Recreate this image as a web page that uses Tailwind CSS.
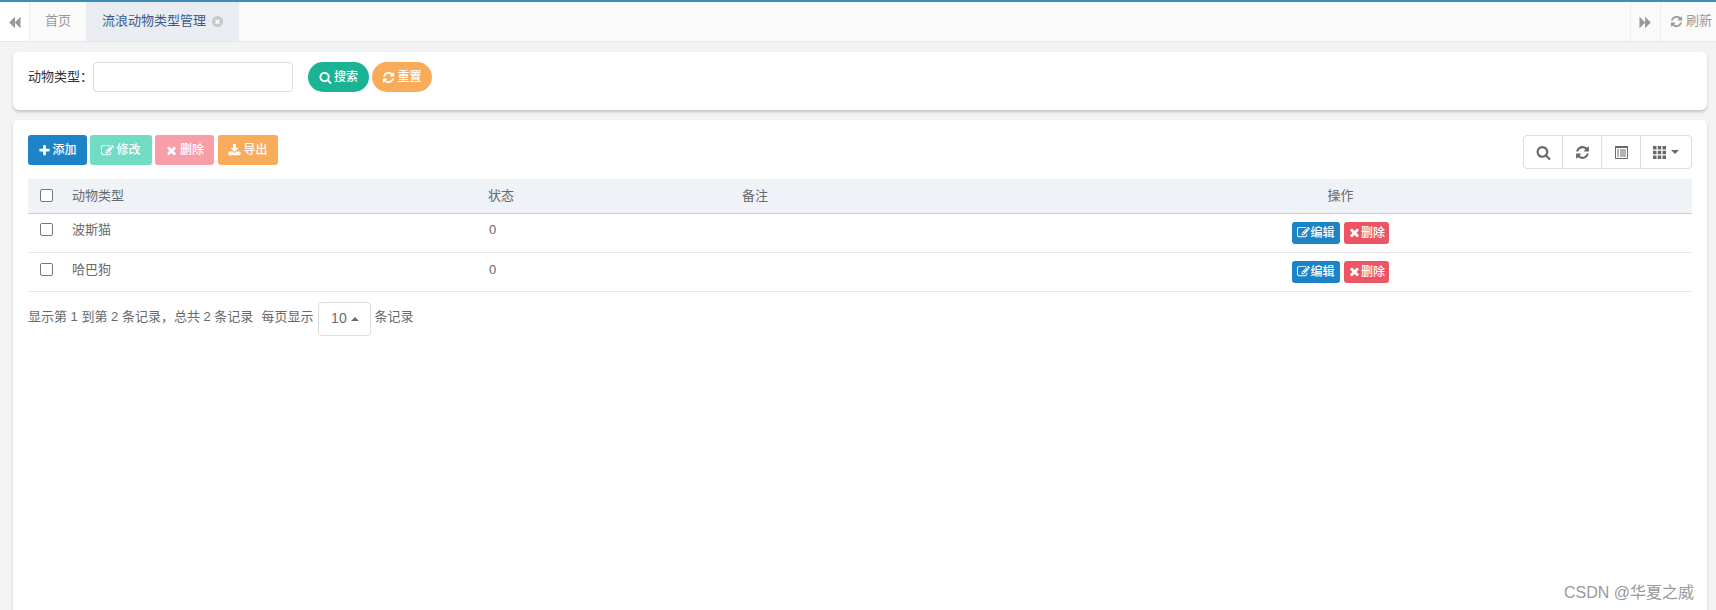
<!DOCTYPE html>
<html lang="zh-CN">

<head>
    <meta charset="UTF-8" />
    <title>流浪动物类型管理</title>
    <script src="https://cdn.jsdelivr.net/npm/@tailwindcss/browser@4"></script>
</head>

<body class="h-[610px] overflow-hidden bg-[#f3f3f4] font-['Liberation_Sans','Noto_Sans_CJK_SC',sans-serif] text-[13px] text-[#676a6c]">
    <!-- icons -->
    <svg class="hidden">
        <symbol id="i-search" viewBox="0 0 1792 1792"><path fill="currentColor" d="M1216 832q0-185-131.5-316.5t-316.5-131.5-316.5 131.5-131.5 316.5 131.5 316.5 316.5 131.5 316.5-131.5 131.5-316.5zm512 832q0 52-38 90t-90 38q-54 0-90-38l-343-342q-179 124-399 124-143 0-273.5-55.5t-225-150-150-225-55.5-273.5 55.5-273.5 150-225 225-150 273.5-55.5 273.5 55.5 225 150 150 225 55.5 273.5q0 220-124 399l343 343q37 37 37 90z"/></symbol>
        <symbol id="i-refresh" viewBox="0 0 1792 1792"><path fill="currentColor" d="M1639 1056q0 5-1 7-64 268-268 434.5t-478 166.5q-146 0-282.5-55t-243.5-157l-129 129q-19 19-45 19t-45-19-19-45v-448q0-26 19-45t45-19h448q26 0 45 19t19 45-19 45l-137 137q71 66 161 102t187 36q134 0 250-65t186-179q11-17 53-117 8-23 30-23h192q13 0 22.5 9.5t9.5 22.5zm25-800v448q0 26-19 45t-45 19h-448q-26 0-45-19t-19-45 19-45l138-138q-148-137-349-137-134 0-250 65t-186 179q-11 17-53 117-8 23-30 23h-199q-13 0-22.5-9.5t-9.5-22.5v-7q65-268 270-434.5t480-166.5q146 0 284 55.5t245 156.5l130-129q19-19 45-19t45 19 19 45z"/></symbol>
        <symbol id="i-plus" viewBox="0 0 1792 1792"><path fill="currentColor" d="M1600 736v192q0 40-28 68t-68 28h-416v416q0 40-28 68t-68 28h-192q-40 0-68-28t-28-68v-416h-416q-40 0-68-28t-28-68v-192q0-40 28-68t68-28h416v-416q0-40 28-68t68-28h192q40 0 68 28t28 68v416h416q40 0 68 28t28 68z"/></symbol>
        <symbol id="i-times" viewBox="0 0 1792 1792"><path fill="currentColor" d="M1490 1322q0 40-28 68l-136 136q-28 28-68 28t-68-28l-294-294-294 294q-28 28-68 28t-68-28l-136-136q-28-28-28-68t28-68l294-294-294-294q-28-28-28-68t28-68l136-136q28-28 68-28t68 28l294 294 294-294q28-28 68-28t68 28l136 136q28 28 28 68t-28 68l-294 294 294 294q28 28 28 68z"/></symbol>
        <symbol id="i-edit" viewBox="0 0 1792 1792"><path fill="currentColor" d="M888 1184l116-116-152-152-116 116v56h96v96h56zm440-720q-16-16-33 1l-350 350q-17 17-1 33t33-1l350-350q17-17 1-33zm80 594v190q0 119-84.5 203.5t-203.5 84.5h-832q-119 0-203.5-84.5t-84.5-203.5v-832q0-119 84.5-203.5t203.5-84.5h832q63 0 117 25 15 7 18 23 3 17-9 29l-49 49q-14 14-32 8-23-6-45-6h-832q-66 0-113 47t-47 113v832q0 66 47 113t113 47h832q66 0 113-47t47-113v-126q0-13 9-22l64-64q15-15 35-7t20 29zm-96-738l288 288-672 672h-288v-288zm444 132l-92 92-288-288 92-92q28-28 68-28t68 28l152 152q28 28 28 68t-28 68z"/></symbol>
        <symbol id="i-download" viewBox="0 0 1792 1792"><path fill="currentColor" d="M1344 1344q0-26-19-45t-45-19-45 19-19 45 19 45 45 19 45-19 19-45zm256 0q0-26-19-45t-45-19-45 19-19 45 19 45 45 19 45-19 19-45zm128-224v320q0 40-28 68t-68 28h-1472q-40 0-68-28t-28-68v-320q0-40 28-68t68-28h465l135 136q58 56 136 56t136-56l136-136h464q40 0 68 28t28 68zm-325-569q17 41-14 70l-448 448q-18 19-45 19t-45-19l-448-448q-31-29-14-70 17-39 59-39h256v-448q0-26 19-45t45-19h256q26 0 45 19t19 45v448h256q42 0 59 39z"/></symbol>
        <symbol id="i-back" viewBox="0 0 1792 1792"><path fill="currentColor" d="M1683 141q19-19 32-13t13 32v1472q0 26-13 32t-32-13l-710-710q-9-9-13-19v710q0 26-13 32t-32-13l-710-710q-19-19-19-45t19-45l710-710q19-19 32-13t13 32v710q4-10 13-19z"/></symbol>
        <symbol id="i-forward" viewBox="0 0 1792 1792"><path fill="currentColor" d="M109 1651q-19 19-32 13t-13-32v-1472q0-26 13-32t32 13l710 710q9 9 13 19v-710q0-26 13-32t32 13l710 710q19 19 19 45t-19 45l-710 710q-19 19-32 13t-13-32v-710q-4 10-13 19z"/></symbol>
        <symbol id="i-list" viewBox="0 0 13 13"><path fill="none" stroke="currentColor" stroke-width="1" d="M.5.500h12v12H.5z"/><path fill="currentColor" d="M0 0h13v2H0zM2 3.500h2v1H2zM5 3.500h6v1H5zM2 5.500h2v1H2zM5 5.500h6v1H5zM2 7.500h2v1H2zM5 7.500h6v1H5zM2 9.500h2v1H2zM5 9.500h6v1H5z"/></symbol>
        <symbol id="i-th" viewBox="0 0 13 13"><path fill="currentColor" d="M0 0h3.500v3.500H0zM4.750 0h3.500v3.500h-3.500zM9.500 0H13v3.500H9.500zM0 4.750h3.500v3.500H0zM4.750 4.750h3.500v3.500h-3.500zM9.500 4.750H13v3.500H9.500zM0 9.500h3.500V13H0zM4.750 9.500h3.500V13h-3.500zM9.500 9.500H13V13H9.500z"/></symbol>
    </svg>

    <!-- Tab bar -->
    <div class="flex h-[42px] border-t-2 border-b border-t-[#3c8dbc] border-b-[#e7e7e7] bg-[#fafafa]">
        <div class="flex w-[30px] items-center justify-center border-r border-[#eeeeee] bg-white text-[#999999]">
            <svg class="mt-px h-[13px] w-[13px]"><use href="#i-back" /></svg>
        </div>
        <div class="flex w-[56px] items-center justify-center pb-px text-[#999999]">首页</div>
        <div class="flex w-[153px] items-center bg-[#e9ecf1] pb-px pl-[16px] text-[#3a5a8c]">
            流浪动物类型管理
            <span class="ml-[6px] flex h-[11px] w-[11px] items-center justify-center rounded-full bg-[#c8c8c8] text-white">
                <svg class="h-[7px] w-[7px]"><use href="#i-times" /></svg>
            </span>
        </div>
        <div class="flex-1"></div>
        <div class="flex w-[30px] items-center justify-center border-l border-[#eeeeee] bg-[#fafafa] text-[#999999]">
            <svg class="mt-px h-[13px] w-[13px]"><use href="#i-forward" /></svg>
        </div>
        <div class="flex w-[56px] items-center gap-[3px] whitespace-nowrap border-l border-[#eeeeee] bg-[#fafafa] pb-px pl-[9px] text-[#999999]">
            <svg class="h-[13px] w-[13px] shrink-0"><use href="#i-refresh" /></svg>刷新
        </div>
    </div>

    <div class="pt-[10px] pr-[9px] pl-[13px]">
        <!-- Search form -->
        <div class="flex h-[58px] items-start rounded-[6px] bg-white pt-[10px] pl-[15px] shadow-[0_2px_3px_rgba(0,0,0,0.2)]">
            <label class="flex h-[30px] w-[65px] items-center whitespace-nowrap text-[#333333]">动物类型：</label>
            <input type="text" class="h-[30px] w-[200px] rounded-[4px] border border-[#dddddd] bg-white" />
            <button class="ml-[15px] flex h-[30px] w-[61px] items-center justify-center gap-[2px] rounded-[15px] bg-[#1ab394] text-[12px] font-medium text-white">
                <svg class="h-[13px] w-[13px]"><use href="#i-search" /></svg>搜索
            </button>
            <button class="ml-[3px] flex h-[30px] w-[60px] items-center justify-center gap-[2px] rounded-[15px] bg-[#f8ac59] text-[12px] font-medium text-white">
                <svg class="h-[13px] w-[13px]"><use href="#i-refresh" /></svg>重置
            </button>
        </div>

        <!-- List -->
        <div class="mt-[10px] h-[490px] rounded-t-[6px] bg-white px-[15px] pt-[15px] shadow-[0_2px_3px_rgba(0,0,0,0.2)]">
            <div class="flex h-[44px] items-start justify-between">
                <div class="flex gap-[3px]">
                    <button class="flex h-[30px] w-[59px] items-center justify-center gap-[1px] rounded-[3px] bg-[#1c84c6] text-[12px] font-medium text-white">
                        <svg class="h-[13px] w-[13px]"><use href="#i-plus" /></svg>添加
                    </button>
                    <button class="flex h-[30px] w-[62px] items-center justify-center gap-[2px] rounded-[3px] bg-[#6fdcc3] text-[12px] font-medium text-white">
                        <svg class="h-[13px] w-[13px]"><use href="#i-edit" /></svg>修改
                    </button>
                    <button class="flex h-[30px] w-[59px] items-center justify-center gap-[2px] rounded-[3px] bg-[#f79ea9] text-[12px] font-medium text-white">
                        <svg class="h-[13px] w-[13px]"><use href="#i-times" /></svg>删除
                    </button>
                    <button class="ml-px flex h-[30px] w-[60px] items-center justify-center gap-[2px] rounded-[3px] bg-[#f8ac59] text-[12px] font-medium text-white">
                        <svg class="h-[13px] w-[13px]"><use href="#i-download" /></svg>导出
                    </button>
                </div>
                <div class="flex h-[34px] w-[169px] rounded-[4px] border border-[#dddddd] text-[#676a6c]">
                    <div class="flex w-[39px] items-center justify-center border-r border-[#dddddd]">
                        <svg class="h-[15px] w-[15px]"><use href="#i-search" /></svg>
                    </div>
                    <div class="flex w-[39px] items-center justify-center border-r border-[#dddddd]">
                        <svg class="h-[15px] w-[15px]"><use href="#i-refresh" /></svg>
                    </div>
                    <div class="flex w-[39px] items-center justify-center border-r border-[#dddddd]">
                        <svg class="h-[13px] w-[13px]"><use href="#i-list" /></svg>
                    </div>
                    <div class="flex flex-1 items-center justify-center gap-[5px]">
                        <svg class="h-[13px] w-[13px]"><use href="#i-th" /></svg>
                        <span class="h-0 w-0 border-x-[4px] border-t-[4px] border-x-transparent border-t-[#676a6c]"></span>
                    </div>
                </div>
            </div>

            <table class="w-[1664px] table-fixed border-collapse">
                <colgroup>
                    <col class="w-[32px]" />
                    <col class="w-[417px]" />
                    <col class="w-[254px]" />
                    <col class="w-[258px]" />
                    <col />
                </colgroup>
                <thead>
                    <tr class="h-[34px] border-b border-[#cccccc] bg-[#eff2f7] text-left font-normal">
                        <th class="pb-[1px] pl-[12px] font-normal"><input type="checkbox" class="block h-[13px] w-[13px] appearance-none rounded-[2px] border border-[#767676] bg-white" /></th>
                        <th class="pb-[1px] pl-[12px] font-normal">动物类型</th>
                        <th class="pb-[1px] pl-[11px] font-normal">状态</th>
                        <th class="pb-[1px] pl-[11px] font-normal">备注</th>
                        <th class="pb-[1px] text-center font-normal">操作</th>
                    </tr>
                </thead>
                <tbody>
                    <tr class="h-[39px] border-b border-[#e7e7e7]">
                        <td class="pb-[6px] pl-[12px]"><input type="checkbox" class="block h-[13px] w-[13px] appearance-none rounded-[2px] border border-[#767676] bg-white" /></td>
                        <td class="pb-[6px] pl-[12px]">波斯猫</td>
                        <td class="pb-[6px] pl-[12px]">0</td>
                        <td></td>
                        <td>
                            <div class="flex justify-center gap-[4px]">
                                <button class="flex h-[22px] w-[48px] items-center justify-center gap-0 rounded-[3px] bg-[#1c84c6] text-[12px] font-medium text-white"><svg class="h-[13px] w-[13px]"><use href="#i-edit" /></svg>编辑</button>
                                <button class="flex h-[22px] w-[45px] items-center justify-center gap-0 rounded-[3px] bg-[#ed5565] text-[12px] font-medium text-white"><svg class="h-[13px] w-[13px]"><use href="#i-times" /></svg>删除</button>
                            </div>
                        </td>
                    </tr>
                    <tr class="h-[39px] border-b border-[#e7e7e7]">
                        <td class="pb-[4px] pl-[12px]"><input type="checkbox" class="block h-[13px] w-[13px] appearance-none rounded-[2px] border border-[#767676] bg-white" /></td>
                        <td class="pb-[4px] pl-[12px]">哈巴狗</td>
                        <td class="pb-[4px] pl-[12px]">0</td>
                        <td></td>
                        <td>
                            <div class="flex justify-center gap-[4px]">
                                <button class="flex h-[22px] w-[48px] items-center justify-center gap-0 rounded-[3px] bg-[#1c84c6] text-[12px] font-medium text-white"><svg class="h-[13px] w-[13px]"><use href="#i-edit" /></svg>编辑</button>
                                <button class="flex h-[22px] w-[45px] items-center justify-center gap-0 rounded-[3px] bg-[#ed5565] text-[12px] font-medium text-white"><svg class="h-[13px] w-[13px]"><use href="#i-times" /></svg>删除</button>
                            </div>
                        </td>
                    </tr>
                </tbody>
            </table>

            <!-- Pagination -->
            <div class="mt-[10px] flex items-start">
                <span class="mt-[5px] whitespace-nowrap">显示第 1 到第 2 条记录，总共 2 条记录</span>
                <span class="mt-[5px] ml-[8px] whitespace-nowrap">每页显示</span>
                <div class="ml-[5px] flex h-[34px] w-[53px] items-center justify-center gap-[4px] rounded-[4px] border border-[#dddddd] text-[14px]">
                    10<span class="h-0 w-0 border-x-[4px] border-b-[4px] border-x-transparent border-b-[#676a6c]"></span>
                </div>
                <span class="mt-[5px] ml-[3px] whitespace-nowrap">条记录</span>
            </div>
        </div>
    </div>

    <!-- CSDN watermark -->
    <div class="absolute top-[581px] left-[1564px] text-[16px] whitespace-nowrap text-[#999999]">CSDN @华夏之威</div>
</body>

</html>
